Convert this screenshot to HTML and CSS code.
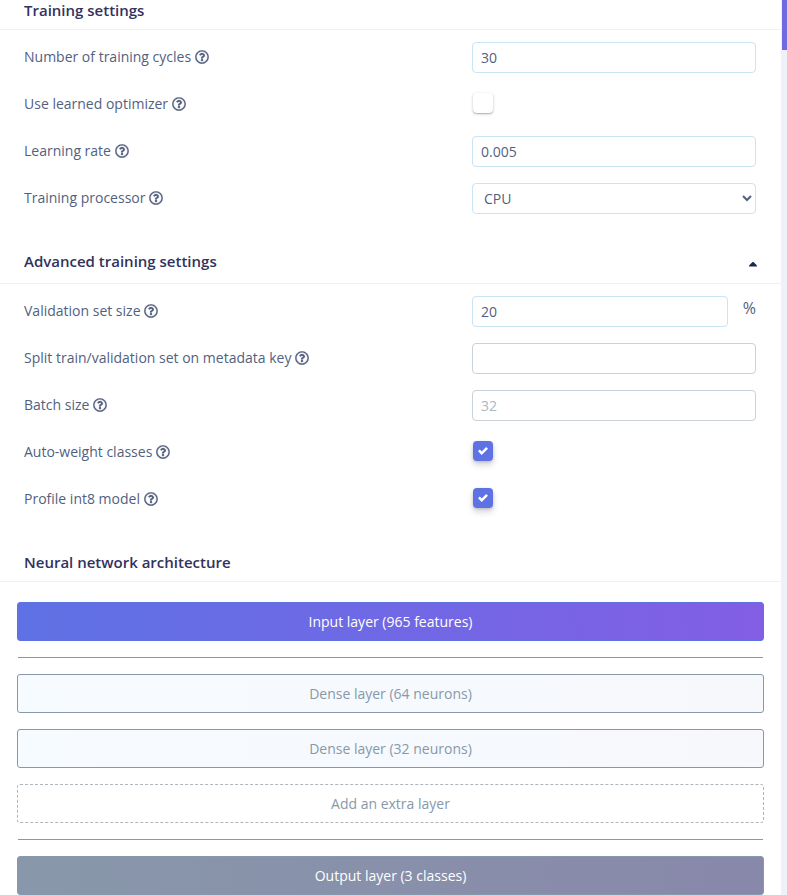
FILE: index.html
```
<!DOCTYPE html>
<html lang="en">
<head>
<meta charset="utf-8">
<title>Training settings</title>
<link rel="stylesheet" href="styles.css">
</head>
<body>
<svg class="defs" width="0" height="0" aria-hidden="true">
  <symbol id="help" viewBox="0 0 512 512"><path fill="currentColor" stroke="currentColor" stroke-width="8" d="M256 8C119.043 8 8 119.083 8 256c0 136.997 111.043 248 248 248s248-111.003 248-248C504 119.083 392.957 8 256 8zm0 448c-110.532 0-200-89.431-200-200 0-110.495 89.472-200 200-200 110.491 0 200 89.471 200 200 0 110.53-89.431 200-200 200zm107.244-255.2c0 67.052-72.421 68.084-72.421 92.863V300c0 6.627-5.373 12-12 12h-45.647c-6.627 0-12-5.373-12-12v-8.659c0-35.745 27.1-50.034 47.579-61.516 17.561-9.845 28.324-16.541 28.324-29.579 0-17.246-21.999-28.693-39.784-28.693-23.189 0-33.894 10.977-48.942 29.969-4.057 5.12-11.46 6.071-16.666 2.124l-27.824-21.098c-5.107-3.872-6.251-11.066-2.644-16.363C184.846 131.491 214.94 112 261.794 112c49.071 0 101.45 38.304 101.45 88.8zM298 368c0 23.159-18.841 42-42 42s-42-18.841-42-42 18.841-42 42-42 42 18.841 42 42z"/></symbol>
</svg>
<div class="page">
  <main class="card">
    <h2 class="heading first">Training settings</h2>
    <section class="rows">
      <div class="row"><label class="label" for="cycles">Number of training cycles <svg class="help"><use href="#help"/></svg></label><input id="cycles" class="field valid" value="30"></div>
      <div class="row"><label class="label">Use learned optimizer <svg class="help"><use href="#help"/></svg></label><span class="check"></span></div>
      <div class="row"><label class="label" for="rate">Learning rate <svg class="help"><use href="#help"/></svg></label><input id="rate" class="field valid" value="0.005"></div>
      <div class="row"><label class="label" for="cpu">Training processor <svg class="help"><use href="#help"/></svg></label><select id="cpu" class="field valid select"><option>CPU</option></select></div>
    </section>
    <h2 class="heading advanced">Advanced training settings <span class="caret"></span></h2>
    <section class="rows">
      <div class="row"><label class="label" for="val">Validation set size <svg class="help"><use href="#help"/></svg></label><input id="val" class="field valid" value="20"><span class="unit">%</span></div>
      <div class="row"><label class="label" for="key">Split train/validation set on metadata key <svg class="help"><use href="#help"/></svg></label><input id="key" class="field"></div>
      <div class="row"><label class="label" for="batch">Batch size <svg class="help"><use href="#help"/></svg></label><input id="batch" class="field" placeholder="32"></div>
      <div class="row"><label class="label">Auto-weight classes <svg class="help"><use href="#help"/></svg></label><span class="check on"><svg class="tick" viewBox="0 0 8 8"><path fill="#fff" d="M6.564.75l-3.59 3.612-1.538-1.55L0 4.26 2.974 7.25 8 2.193z"/></svg></span></div>
      <div class="row"><label class="label">Profile int8 model <svg class="help"><use href="#help"/></svg></label><span class="check on"><svg class="tick" viewBox="0 0 8 8"><path fill="#fff" d="M6.564.75l-3.59 3.612-1.538-1.55L0 4.26 2.974 7.25 8 2.193z"/></svg></span></div>
    </section>
    <h2 class="heading network">Neural network architecture</h2>
    <section class="layers">
      <div class="layer input">Input layer (965 features)</div>
      <div class="rule"></div>
      <div class="layer dense">Dense layer (64 neurons)</div>
      <div class="layer dense">Dense layer (32 neurons)</div>
      <div class="layer add">Add an extra layer</div>
      <div class="rule"></div>
      <div class="layer output">Output layer (3 classes)</div>
    </section>
  </main>
  <aside class="gutter"><div class="banner"></div></aside>
</div>
</body>
</html>
```
FILE: styles.css
```
* { box-sizing: border-box; }
body { margin: 0; background: #fff; color: #525f7f; font: 14px/21px "Open Sans", sans-serif; overflow: hidden; }
.defs { position: absolute; }
.page { display: flex; height: 895px; overflow: hidden; }
.card { width: 781px; flex: none; }
.gutter { flex: 1; background: #f0f1f8; padding-left: 1px; }
.banner { height: 50px; background: #7069df; }
.heading { display: flex; justify-content: space-between; align-items: center; margin: 0; padding: 0 24px; border-bottom: 1px solid #eff0f2; color: #32325d; font-size: 15px; line-height: 22px; font-weight: 600; }
.first { height: 30px; padding-bottom: 10px; }
.advanced { height: 44px; margin-top: 26px; padding-bottom: 2px; }
.network { height: 41px; margin-top: 26px; padding-top: 2px; }
.caret { width: 8px; height: 5px; margin-top: 7px; background: #172b4d; clip-path: polygon(50% 0, 100% 80%, 100% 100%, 0 100%, 0 80%); }
.rows { display: flex; flex-direction: column; gap: 16px; padding: 12px 25px 0 24px; }
.row { display: flex; height: 31px; align-items: flex-start; }
.label { width: 448px; flex: none; padding-top: 4px; }
.help { width: 14px; height: 14px; vertical-align: -2px; overflow: visible; }
.field { flex: 1; min-width: 0; height: 31px; padding: 0 8px; border: 1px solid #cad1d7; border-radius: 4px; background: #fff; color: #525f7f; font: 14px "Open Sans", sans-serif; outline: none; }
.field::placeholder { color: #adb5bd; opacity: 1; }
.valid { border-color: #c9e4f3; }
.select { padding: 0 0 0 7px; }
.unit { margin-left: 15px; font-size: 16px; line-height: 24px; }
.check { display: flex; align-items: center; justify-content: center; width: 20px; height: 20px; margin: 4px 0 0 1px; border-radius: 4px; background: #fff; box-shadow: 0 1px 3px rgba(50,50,93,.25), 0 1px 1px rgba(0,0,0,.18); }
.on { background: #5e72e4; box-shadow: 0 4px 6px rgba(50,50,93,.2), 0 1px 3px rgba(0,0,0,.16); }
.tick { width: 10px; height: 10px; }
.layers { display: flex; flex-direction: column; gap: 16px; padding: 20px 17px 0; }
.layer { height: 39px; border: 1px solid #8898aa; border-radius: 3px; text-align: center; line-height: 37px; color: #8898aa; }
.input { border-color: #5e72e4; background: linear-gradient(87deg, #5e72e4, #825ee4); color: #fff; }
.dense { background: linear-gradient(87deg, #f6fbff, #f6f8fc); }
.add { border: 1px dashed #adb5bd; }
.rule { height: 1px; margin: 0 1px; background: #8898aa; }
.output { background: linear-gradient(87deg, #8898aa, #8888aa); color: #fff; }
```
